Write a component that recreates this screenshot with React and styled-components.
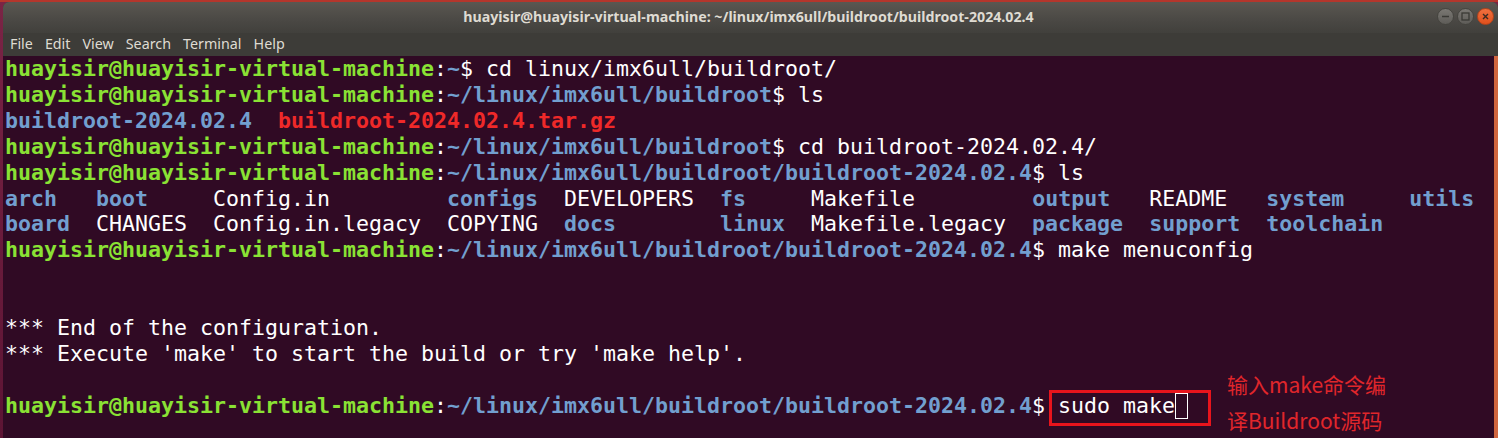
import React from 'react';
import styled, { createGlobalStyle } from 'styled-components';

const GlobalStyle = createGlobalStyle`
  html, body {
    margin: 0;
    padding: 0;
    width: 1498px;
    height: 438px;
    overflow: hidden;
    background: #6a1c3a;
  }
`;

const Desktop = styled.div`
  width: 1498px;
  height: 438px;
  box-sizing: border-box;
  padding: 2px 0 0 3px;
  background: linear-gradient(180deg, #b4362c 0px, #b4362c 2px, #7a2445 2px, #5c1434 100%);
  display: flex;
`;

const Window = styled.div`
  flex: 1;
  display: flex;
  flex-direction: column;
  border-radius: 6px 6px 0 0;
  overflow: hidden;
  background: #3c3b37;
`;

const TitleBar = styled.div`
  height: 31px;
  flex-shrink: 0;
  position: relative;
  display: flex;
  align-items: center;
  justify-content: center;
  background: linear-gradient(180deg, #5a5751 0%, #4a4844 60%, #41403c 100%);
  font-family: 'Noto Sans', 'DejaVu Sans', sans-serif;
  font-weight: 700;
  font-size: 14.2px;
  color: #dfdbd2;
  padding: 0 4px 2px 0;
  box-sizing: border-box;
`;

const Controls = styled.div`
  position: absolute;
  right: 4px;
  top: 6px;
  display: flex;
  gap: 3px;
`;

const WinButton = styled.div`
  width: 17px;
  height: 17px;
  border-radius: 50%;
  box-sizing: border-box;
  display: flex;
  align-items: center;
  justify-content: center;
  background: ${({ close }) =>
    close ? 'linear-gradient(180deg, #f0703f, #e0501c)' : 'linear-gradient(180deg, #7a7873, #5e5c58)'};
  border: 1px solid ${({ close }) => (close ? '#b8431a' : '#45443f')};
`;

const MenuBar = styled.div`
  height: 23px;
  flex-shrink: 0;
  display: flex;
  align-items: center;
  gap: 12px;
  padding: 0 0 2px 7px;
  box-sizing: border-box;
  background: #3d3c38;
  font-family: 'Noto Sans', 'DejaVu Sans', sans-serif;
  font-size: 14.3px;
  color: #dfdbd2;
`;

const Terminal = styled.div`
  flex: 1;
  position: relative;
  background: #300a24;
  border-right: 4px solid #d0663f;
  padding: 0 0 0 2px;
  font-family: 'DejaVu Sans Mono', monospace;
  font-size: 21.6px;
  line-height: 25.92px;
  color: #ffffff;
  white-space: pre;
`;

const Line = styled.div`
  height: 25.92px;
`;

const Span = styled.span`
  color: ${({ c }) =>
    c === 'green' ? '#8ae234' : c === 'blue' ? '#729fcf' : c === 'red' ? '#ef2929' : '#ffffff'};
  font-weight: ${({ c }) => (c ? 700 : 400)};
`;

const Highlight = styled.span`
  position: relative;
  &::after {
    content: '';
    position: absolute;
    left: -9px;
    right: -23px;
    top: -3px;
    bottom: -8px;
    border: 3px solid #e8141c;
  }
`;

const Cursor = styled.span`
  display: inline-block;
  width: 13px;
  height: 26px;
  box-sizing: border-box;
  border: 1px solid #ffffff;
  vertical-align: top;
`;

const Note = styled.div`
  position: absolute;
  left: 1224px;
  top: 310px;
  font-family: 'Noto Sans CJK SC', 'Noto Sans', sans-serif;
  font-size: 21px;
  line-height: 36px;
  color: #e0262b;
  white-space: normal;
`;

const Prompt = ({ path }) => (
  <>
    <Span c="green">huayisir@huayisir-virtual-machine</Span>:<Span c="blue">{path}</Span>$
  </>
);

const P1 = '~/linux/imx6ull/buildroot';
const P2 = '~/linux/imx6ull/buildroot/buildroot-2024.02.4';

export default function App() {
  return (
    <>
      <GlobalStyle />
      <Desktop>
        <Window>
          <TitleBar>
            huayisir@huayisir-virtual-machine: ~/linux/imx6ull/buildroot/buildroot-2024.02.4
            <Controls>
              <WinButton>
                <svg width="9" height="9" viewBox="0 0 9 9">
                  <line x1="1" y1="4.5" x2="8" y2="4.5" stroke="#3a3935" strokeWidth="1.4" />
                </svg>
              </WinButton>
              <WinButton>
                <svg width="9" height="9" viewBox="0 0 9 9">
                  <rect x="1" y="1" width="7" height="7" fill="none" stroke="#3a3935" strokeWidth="1.3" />
                </svg>
              </WinButton>
              <WinButton close>
                <svg width="9" height="9" viewBox="0 0 9 9">
                  <path d="M2 2 L7 7 M7 2 L2 7" stroke="#3a2a22" strokeWidth="1.4" />
                </svg>
              </WinButton>
            </Controls>
          </TitleBar>
          <MenuBar>
            <span>File</span>
            <span>Edit</span>
            <span>View</span>
            <span>Search</span>
            <span>Terminal</span>
            <span>Help</span>
          </MenuBar>
          <Terminal>
            <Line><Span c="green">huayisir@huayisir-virtual-machine</Span>:<Span c="blue">~</Span>$ cd linux/imx6ull/buildroot/</Line>
            <Line><Prompt path={P1} /> ls</Line>
            <Line><Span c="blue">buildroot-2024.02.4</Span>  <Span c="red">buildroot-2024.02.4.tar.gz</Span></Line>
            <Line><Prompt path={P1} /> cd buildroot-2024.02.4/</Line>
            <Line><Prompt path={P2} /> ls</Line>
            <Line><Span c="blue">arch</Span>   <Span c="blue">boot</Span>     Config.in         <Span c="blue">configs</Span>  DEVELOPERS  <Span c="blue">fs</Span>     Makefile         <Span c="blue">output</Span>   README   <Span c="blue">system</Span>     <Span c="blue">utils</Span></Line>
            <Line><Span c="blue">board</Span>  CHANGES  Config.in.legacy  COPYING  <Span c="blue">docs</Span>        <Span c="blue">linux</Span>  Makefile.legacy  <Span c="blue">package</Span>  <Span c="blue">support</Span>  <Span c="blue">toolchain</Span></Line>
            <Line><Prompt path={P2} /> make menuconfig</Line>
            <Line />
            <Line />
            <Line>*** End of the configuration.</Line>
            <Line>*** Execute 'make' to start the build or try 'make help'.</Line>
            <Line />
            <Line><Prompt path={P2} /> <Highlight>sudo make<Cursor /></Highlight></Line>
            <Note>
              输入make命令编
              <br />
              译Buildroot源码
            </Note>
          </Terminal>
        </Window>
      </Desktop>
    </>
  );
}
